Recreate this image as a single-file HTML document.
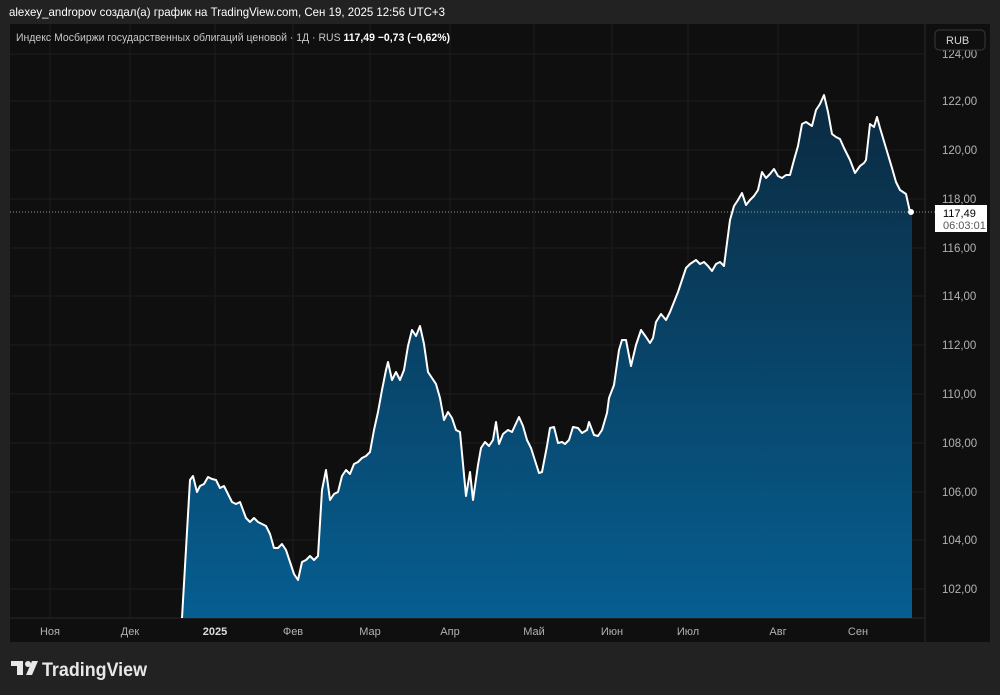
<!DOCTYPE html>
<html><head><meta charset="utf-8"><style>
html,body{margin:0;padding:0;background:#222;width:1000px;height:695px;overflow:hidden;font-family:"Liberation Sans","DejaVu Sans",sans-serif}
</style></head><body>
<svg width="1000" height="695" xmlns="http://www.w3.org/2000/svg" style="position:absolute;left:0;top:0">
<defs><linearGradient id="g" x1="0" y1="95" x2="0" y2="618" gradientUnits="userSpaceOnUse">
<stop offset="0" stop-color="#0b2a40"/><stop offset="1" stop-color="#065e91"/></linearGradient></defs>
<rect x="0" y="0" width="1000" height="695" fill="#222"/>
<text x="9" y="16" fill="#fff" font-size="12" textLength="436" lengthAdjust="spacingAndGlyphs">alexey_andropov создал(а) график на TradingView.com, Сен 19, 2025 12:56 UTC+3</text>
<rect x="10" y="24" width="980" height="618" fill="#0f0f0f"/>
<g stroke="#1c1c1c" stroke-width="1">
<line x1="10" y1="54" x2="925" y2="54"/><line x1="10" y1="101" x2="925" y2="101"/><line x1="10" y1="150" x2="925" y2="150"/><line x1="10" y1="199" x2="925" y2="199"/><line x1="10" y1="248" x2="925" y2="248"/><line x1="10" y1="296" x2="925" y2="296"/><line x1="10" y1="345" x2="925" y2="345"/><line x1="10" y1="394" x2="925" y2="394"/><line x1="10" y1="443" x2="925" y2="443"/><line x1="10" y1="492" x2="925" y2="492"/><line x1="10" y1="540" x2="925" y2="540"/><line x1="10" y1="589" x2="925" y2="589"/>
<line x1="50" y1="24" x2="50" y2="618"/><line x1="130" y1="24" x2="130" y2="618"/><line x1="215" y1="24" x2="215" y2="618"/><line x1="293" y1="24" x2="293" y2="618"/><line x1="370" y1="24" x2="370" y2="618"/><line x1="450" y1="24" x2="450" y2="618"/><line x1="534" y1="24" x2="534" y2="618"/><line x1="612" y1="24" x2="612" y2="618"/><line x1="688" y1="24" x2="688" y2="618"/><line x1="778" y1="24" x2="778" y2="618"/><line x1="858" y1="24" x2="858" y2="618"/>
</g>
<line x1="925" y1="24" x2="925" y2="642" stroke="#2a2a2a"/>
<line x1="10" y1="618" x2="925" y2="618" stroke="#2a2a2a"/>
<polygon fill="url(#g)" points="182,618 190,480 193,476 197,492 200,486 204,484 208,477 212,479 216,480 220,488 224,486 228,494 232,502 236,504 240,502 243,510 246,518 250,522 254,518 258,522 262,524 266,526 270,534 274,548 278,548 282,544 286,550 290,562 294,574 298,580 302,562 306,560 310,556 314,560 318,556 322,490 326,470 330,500 334,494 338,492 342,476 346,470 350,474 354,464 358,462 362,458 366,456 370,452 374,430 378,412 382,390 386,370 388,362 392,380 396,372 400,380 404,370 408,346 412,330 416,336 420,326 424,344 428,372 432,378 436,384 440,398 444,420 448,412 452,418 456,430 460,432 466,496 470,472 473,500 478,465 481,448 485,442 489,446 493,440 496,422 499,444 503,434 508,430 512,432 519,417 523,426 527,440 531,448 539,473 542,472 547,446 550,428 554,427 558,443 562,442 565,444 569,440 573,427 578,428 582,433 587,430 589,422 594,435 598,436 602,430 607,413 609,398 614,385 619,350 622,340 626,340 631,366 636,345 641,330 646,337 650,343 653,338 656,322 661,314 666,320 670,312 674,302 678,292 682,280 686,268 690,264 696,260 700,264 704,262 708,266 712,271 716,264 720,262 724,266 730,220 734,206 738,200 742,193 746,205 750,200 754,196 758,190 762,172 766,178 770,174 774,169 778,176 782,178 786,175 790,175 794,160 798,146 802,124 806,122 812,126 816,110 820,104 824,95 828,112 832,134 836,137 840,139 844,148 850,160 855,173 860,166 864,163 866,160 870,124 874,127 877,117 880,128 886,148 892,168 896,182 900,190 906,194 910,212 912,212 912,618"/>
<polyline fill="none" stroke="#fff" stroke-width="2" stroke-linejoin="round" points="182,618 190,480 193,476 197,492 200,486 204,484 208,477 212,479 216,480 220,488 224,486 228,494 232,502 236,504 240,502 243,510 246,518 250,522 254,518 258,522 262,524 266,526 270,534 274,548 278,548 282,544 286,550 290,562 294,574 298,580 302,562 306,560 310,556 314,560 318,556 322,490 326,470 330,500 334,494 338,492 342,476 346,470 350,474 354,464 358,462 362,458 366,456 370,452 374,430 378,412 382,390 386,370 388,362 392,380 396,372 400,380 404,370 408,346 412,330 416,336 420,326 424,344 428,372 432,378 436,384 440,398 444,420 448,412 452,418 456,430 460,432 466,496 470,472 473,500 478,465 481,448 485,442 489,446 493,440 496,422 499,444 503,434 508,430 512,432 519,417 523,426 527,440 531,448 539,473 542,472 547,446 550,428 554,427 558,443 562,442 565,444 569,440 573,427 578,428 582,433 587,430 589,422 594,435 598,436 602,430 607,413 609,398 614,385 619,350 622,340 626,340 631,366 636,345 641,330 646,337 650,343 653,338 656,322 661,314 666,320 670,312 674,302 678,292 682,280 686,268 690,264 696,260 700,264 704,262 708,266 712,271 716,264 720,262 724,266 730,220 734,206 738,200 742,193 746,205 750,200 754,196 758,190 762,172 766,178 770,174 774,169 778,176 782,178 786,175 790,175 794,160 798,146 802,124 806,122 812,126 816,110 820,104 824,95 828,112 832,134 836,137 840,139 844,148 850,160 855,173 860,166 864,163 866,160 870,124 874,127 877,117 880,128 886,148 892,168 896,182 900,190 906,194 910,212"/>
<line x1="10" y1="212" x2="935" y2="212" stroke="#9a9a9a" stroke-width="1" stroke-dasharray="1,2"/>
<circle cx="911" cy="212" r="3" fill="#fff"/>
<g fill="#b2b2b2" font-size="11.5">
<text x="942" y="58">124,00</text><text x="942" y="105">122,00</text><text x="942" y="154">120,00</text><text x="942" y="203">118,00</text><text x="942" y="252">116,00</text><text x="942" y="300">114,00</text><text x="942" y="349">112,00</text><text x="942" y="398">110,00</text><text x="942" y="447">108,00</text><text x="942" y="496">106,00</text><text x="942" y="544">104,00</text><text x="942" y="593">102,00</text>
</g>
<rect x="935" y="30" width="50" height="20" rx="4" fill="#0f0f0f" stroke="#3a3a3a"/>
<text x="946" y="44" fill="#d8d8d8" font-size="11">RUB</text>
<rect x="935" y="205" width="52" height="27" fill="#fff"/>
<text x="943" y="217" fill="#000" font-size="11">117,49</text>
<text x="943" y="229" fill="#555" font-size="11">06:03:01</text>
<g fill="#b2b2b2" font-size="11" text-anchor="middle">
<text x="50" y="635">Ноя</text><text x="130" y="635">Дек</text><text x="215" y="635" fill="#ddd" font-weight="bold">2025</text><text x="293" y="635">Фев</text><text x="370" y="635">Мар</text><text x="450" y="635">Апр</text><text x="534" y="635">Май</text><text x="612" y="635">Июн</text><text x="688" y="635">Июл</text><text x="778" y="635">Авг</text><text x="858" y="635">Сен</text>
</g>
<text x="16" y="41" fill="#c8c8c8" font-size="11" textLength="434" lengthAdjust="spacingAndGlyphs">Индекс Мосбиржи государственных облигаций ценовой · 1Д · RUS <tspan fill="#fff" font-weight="bold">117,49  −0,73 (−0,62%)</tspan></text>
<g fill="#e8e8e8">
<rect x="11" y="661" width="12" height="5"/><rect x="17" y="661" width="6" height="14"/>
<circle cx="28" cy="664" r="3"/><polygon points="32,661 38,661 32,675 26,675"/>
</g>
<text x="42" y="676" fill="#e8e8e8" font-size="19" font-weight="bold" textLength="105" lengthAdjust="spacingAndGlyphs">TradingView</text>
</svg>
</body></html>
